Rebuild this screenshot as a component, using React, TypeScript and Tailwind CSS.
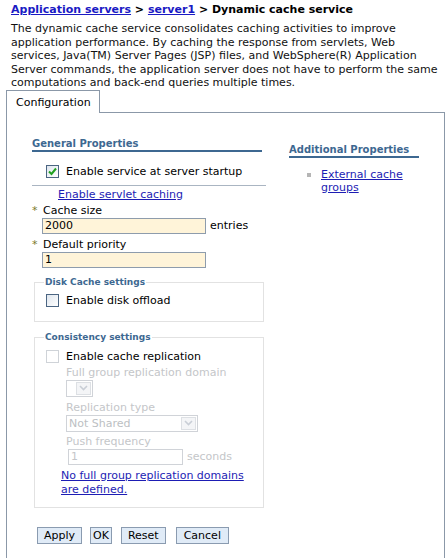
import React from "react";

const Check = ({ checked, disabled }: { checked?: boolean; disabled?: boolean }) => (
  <span
    className={`flex h-[13px] w-[13px] shrink-0 items-center justify-center border ${
      disabled ? "border-[#cfd3d8] bg-white" : "border-[#4b6582] bg-gradient-to-br from-[#dfe6ee] to-white"
    }`}
  >
    {checked && (
      <svg width="9" height="9" viewBox="0 0 9 9">
        <path d="M1 4.5 L3.5 7 L8 1.5" fill="none" stroke="#21a121" strokeWidth="2" />
      </svg>
    )}
  </span>
);

const Chevron = () => (
  <svg width="9" height="6" viewBox="0 0 9 6">
    <path d="M1 1 L4.5 4.5 L8 1" fill="none" stroke="#c9ced6" strokeWidth="1.6" />
  </svg>
);

export default function App() {
  return (
    <div
      className="relative h-[558px] w-[448px] overflow-hidden bg-white text-[11px] leading-[13px] text-black"
      style={{ fontFamily: '"DejaVu Sans", Verdana, sans-serif' }}
    >
      <div className="whitespace-nowrap pl-[11px] pt-[3px] font-bold leading-[13px]">
        <span className="text-[#1a1ac4] underline">Application servers</span>
        <span> &gt; </span>
        <span className="text-[#1a1ac4] underline">server1</span>
        <span> &gt; Dynamic cache service</span>
      </div>
      <div className="mt-[6px] whitespace-nowrap pl-[11px] leading-[13.5px] text-[#111]">
        The dynamic cache service consolidates caching activities to improve
        <br />
        application performance. By caching the response from servlets, Web
        <br />
        services, Java(TM) Server Pages (JSP) files, and WebSphere(R) Application
        <br />
        Server commands, the application server does not have to perform the same
        <br />
        computations and back-end queries multiple times.
      </div>

      <div className="ml-[6px] mr-[3px]">
        <div className="flex">
          <div className="h-[23px] w-[94px] border-l border-r border-t border-[#8b98a8] pl-[9px] pt-[5px]">
            Configuration
          </div>
          <div className="flex-1 border-b border-[#8b98a8]" />
        </div>
        <div className="flex h-[460px] border-l border-r border-[#8b98a8] pl-[25px] pt-[25px]">
          <div className="w-[234px]">
            <div className="w-[230px] border-b-2 border-[#3d6891] text-[10px] font-bold leading-[12px] text-[#3d6891]">
              General Properties
            </div>
            <div className="ml-[14px] mt-[13px] flex items-center gap-[7px]">
              <Check checked />
              <span>Enable service at server startup</span>
            </div>
            <div className="mt-[7px] h-px w-[234px] bg-[#aab5c2]" />
            <div className="ml-[26px] mt-[2px] text-[#1d1db4] underline">Enable servlet caching</div>
            <div className="mt-[3px] flex">
              <span className="w-[11px] text-[#7a7a2a]">*</span>
              <span>Cache size</span>
            </div>
            <div className="ml-[10px] mt-[1px] flex items-center">
              <div className="h-[16px] w-[164px] border border-[#8e9cac] bg-[#fff4d9] pl-[2px] leading-[14px]">
                2000
              </div>
              <span className="ml-[4px]">entries</span>
            </div>
            <div className="mt-[4px] flex">
              <span className="w-[11px] text-[#7a7a2a]">*</span>
              <span>Default priority</span>
            </div>
            <div className="ml-[10px] mt-[1px] flex items-center">
              <div className="h-[16px] w-[164px] border border-[#8e9cac] bg-[#fff4d9] pl-[2px] leading-[14px]">
                1
              </div>
            </div>

            <fieldset className="ml-[2px] mt-[8px] w-[230px] border border-[#e2e2e2] pb-[14px]">
              <legend className="ml-[9px] px-[1px] text-[9px] font-bold leading-[13px] text-[#3d6891]">
                Disk Cache settings
              </legend>
              <div className="ml-[11px] mt-[5px] flex items-center gap-[7px]">
                <Check />
                <span>Enable disk offload</span>
              </div>
            </fieldset>

            <fieldset className="ml-[2px] mt-[9px] w-[230px] border border-[#e2e2e2] pb-[10px]">
              <legend className="ml-[9px] px-[1px] text-[9px] font-bold leading-[13px] text-[#3d6891]">
                Consistency settings
              </legend>
              <div className="ml-[11px] mt-[6px] flex items-center gap-[7px]">
                <Check disabled />
                <span>Enable cache replication</span>
              </div>
              <div className="ml-[31px] text-[#c4c6c9]">
                <div className="mt-[3px] whitespace-nowrap">Full group replication domain</div>
                <div className="mt-[1px] flex h-[17px] w-[27px] items-center justify-end border border-[#d0d3d8] pr-[1px]">
                  <div className="flex h-[13px] w-[15px] items-center justify-center border border-[#dde0e4] bg-[#f4f5f7]">
                    <Chevron />
                  </div>
                </div>
                <div className="mt-[4px]">Replication type</div>
                <div className="mt-[1px] flex h-[17px] w-[132px] items-center justify-between border border-[#d0d3d8] pl-[2px] pr-[1px] text-[#bcbfc3]">
                  <span>Not Shared</span>
                  <div className="flex h-[13px] w-[15px] items-center justify-center border border-[#dde0e4] bg-[#f4f5f7]">
                    <Chevron />
                  </div>
                </div>
                <div className="mt-[3px]">Push frequency</div>
                <div className="ml-[2px] mt-[1px] flex items-center">
                  <div className="h-[16px] w-[115px] border border-[#d0d3d8] pl-[2px] leading-[14px]">1</div>
                  <span className="ml-[4px]">seconds</span>
                </div>
              </div>
              <div className="ml-[26px] mt-[4px] leading-[14px] text-[#1d1db4] underline">
                No full group replication domains
                <br />
                are defined.
              </div>
            </fieldset>

            <div className="ml-[5px] mt-[19px] flex">
              <button className="h-[17px] border border-[#8a9bb0] bg-[#e0ebf7] px-[6px] leading-[15px]">Apply</button>
              <button className="ml-[8px] h-[17px] border border-[#8a9bb0] bg-[#e0ebf7] px-[2px] leading-[15px]">OK</button>
              <button className="ml-[9px] h-[17px] border border-[#8a9bb0] bg-[#e0ebf7] px-[6px] leading-[15px]">Reset</button>
              <button className="ml-[10px] h-[17px] border border-[#8a9bb0] bg-[#e0ebf7] px-[7px] leading-[15px]">Cancel</button>
            </div>
          </div>

          <div className="ml-[23px] mt-[5px]">
            <div className="w-[130px] whitespace-nowrap border-b-2 border-[#3d6891] text-[10px] font-bold leading-[13px] text-[#3d6891]">
              Additional Properties
            </div>
            <div className="ml-[18px] mt-[10px] flex">
              <span className="mt-[5px] h-[4px] w-[4px] shrink-0 bg-[#b5b5b5]" />
              <span className="ml-[10px] w-[90px] text-[#1d1db4] underline">External cache groups</span>
            </div>
          </div>
        </div>
      </div>
    </div>
  );
}
